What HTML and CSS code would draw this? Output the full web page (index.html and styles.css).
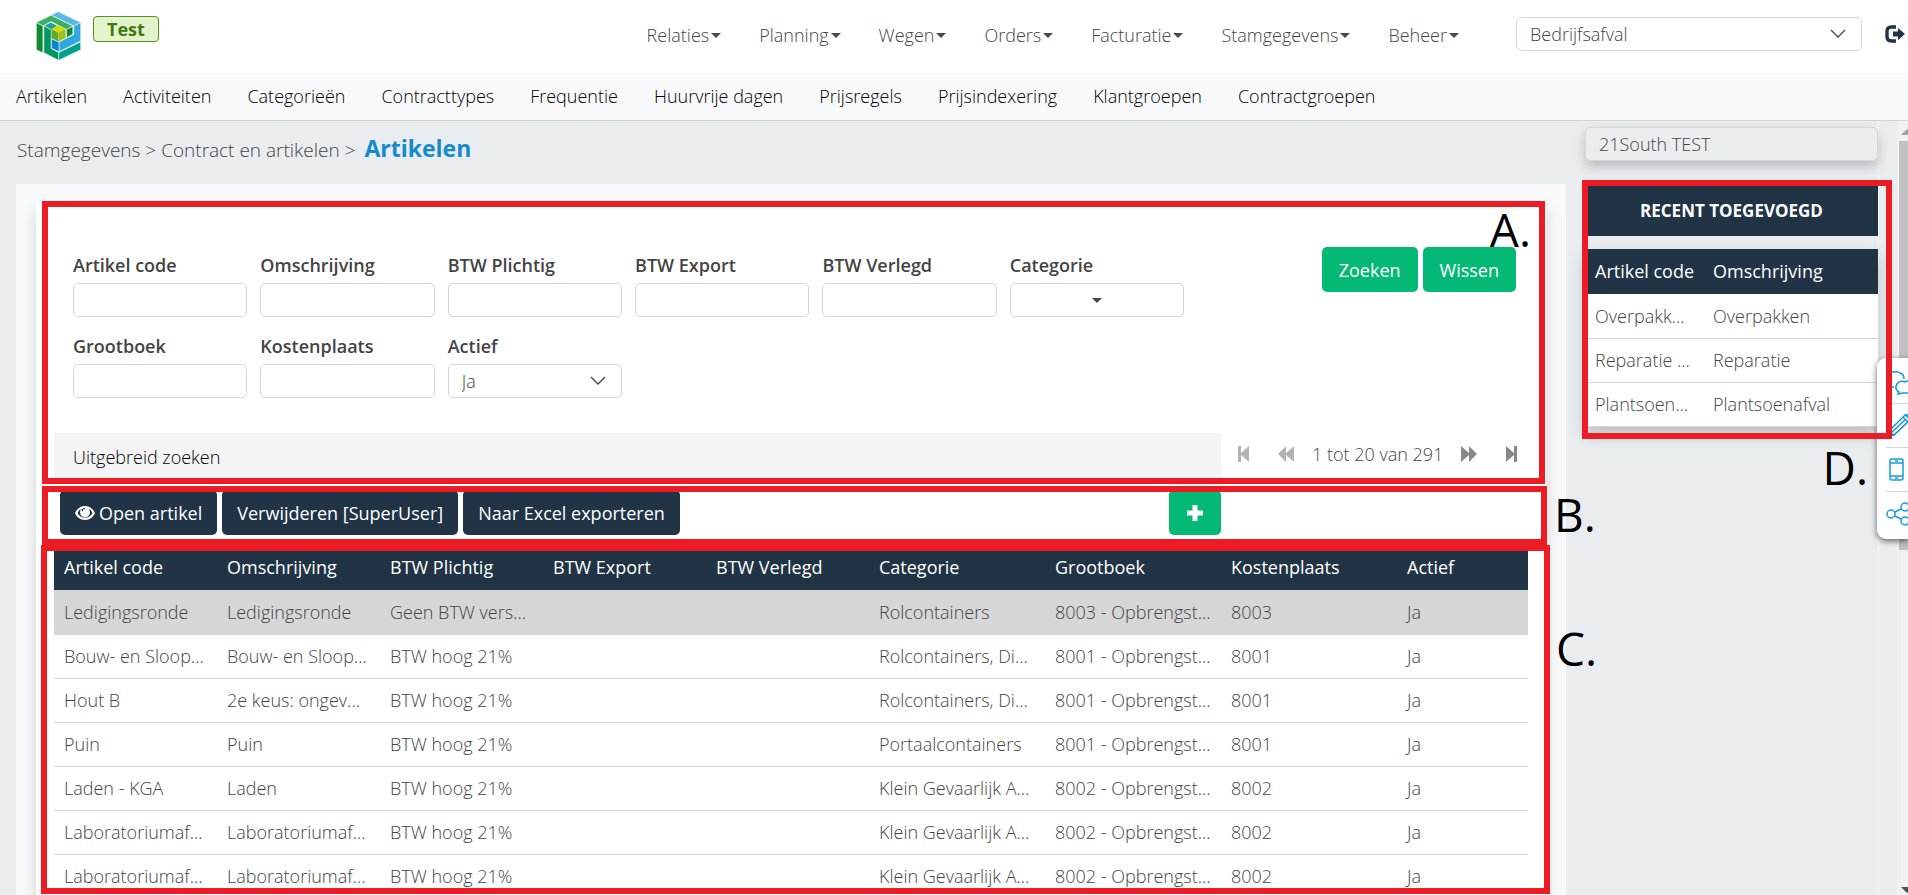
FILE: index.html
```html
<!DOCTYPE html>
<html lang="nl">
<head>
<meta charset="utf-8">
<title>Artikelen</title>
<link rel="stylesheet" href="styles.css">
</head>
<body>
<div class="app">
  <header class="topbar">
    <svg class="logo" viewBox="107 32 137 150" aria-hidden="true">
      <g stroke="#d8f0ea" stroke-width="2" stroke-linejoin="round">
        <polygon fill="#5bb8e6" points="153,43 175,33 243,66 222,77"/>
        <polygon fill="#2fa8df" points="222,77 243,66 243,122 177,155 177,125 222,103"/>
        <polygon fill="#00a08c" points="243,125 243,149 176,181 176,157"/>
        <polygon fill="#0f8a2e" points="108,66 128,76 128,158 108,149"/>
        <polygon fill="#3dab62" points="108,66 153,44 220,77 200,87 153,63 128,76"/>
        <polygon fill="#1f9f9a" points="131,76 152,65 173,76 153,88"/>
        <polygon fill="#009764" points="131,76 153,88 153,145 176,157 176,181 131,158"/>
        <polygon fill="#0f8a2e" points="200,87 219,78 219,102 200,112"/>
        <polygon fill="#0b83cf" points="154,115 177,126 177,155 154,144"/>
      </g>
      <polygon fill="#d3d800" points="154,86 175,75 197,86 175,97"/>
      <polygon fill="#62a82a" points="154,86 175,97 175,124 154,113"/>
      <polygon fill="#9dbf1c" points="175,97 197,86 197,113 175,124"/>
    </svg>
    <span class="env">Test</span>
    <nav class="mainnav">
      <a href="#">Relaties<i class="caret"></i></a>
      <a href="#">Planning<i class="caret"></i></a>
      <a href="#">Wegen<i class="caret"></i></a>
      <a href="#">Orders<i class="caret"></i></a>
      <a href="#">Facturatie<i class="caret"></i></a>
      <a href="#">Stamgegevens<i class="caret"></i></a>
      <a href="#">Beheer<i class="caret"></i></a>
    </nav>
    <select class="control select company" aria-label="Afvalstroom"><option>Bedrijfsafval</option></select>
    <button class="logout" type="button" aria-label="Uitloggen">
      <svg viewBox="0 0 20 18"><path d="M11 2H6.500Q2 2 2 6.500V11.500Q2 16 6.500 16H11" fill="none" stroke="#203446" stroke-width="3.400"/><path d="M8 6.500h5V3l7 6-7 6v-3.500H8z" fill="#203446"/></svg>
    </button>
  </header>

  <nav class="subnav">
    <a href="#">Artikelen</a><a href="#">Activiteiten</a><a href="#">Categorieën</a><a href="#">Contracttypes</a><a href="#">Frequentie</a><a href="#">Huurvrije dagen</a><a href="#">Prijsregels</a><a href="#">Prijsindexering</a><a href="#">Klantgroepen</a><a href="#">Contractgroepen</a>
  </nav>

  <div class="body">
    <main class="main">
      <h1 class="crumbs">Stamgegevens &gt; Contract en artikelen &gt; <b>Artikelen</b></h1>
      <div class="panel">
        <div class="card">
          <section class="search">
            <span class="letter letter-a">A.</span>
            <form class="filters">
              <div class="fields">
                <div class="field"><label for="code">Artikel code</label><input class="control" id="code"></div>
                <div class="field"><label for="oms">Omschrijving</label><input class="control" id="oms"></div>
                <div class="field"><label for="plicht">BTW Plichtig</label><input class="control" id="plicht"></div>
                <div class="field"><label for="export">BTW Export</label><input class="control" id="export"></div>
                <div class="field"><label for="verlegd">BTW Verlegd</label><input class="control" id="verlegd"></div>
                <div class="field"><label for="cat">Categorie</label><button class="control pick" id="cat" type="button"><i class="caret"></i></button></div>
                <div class="field"><label for="groot">Grootboek</label><input class="control" id="groot"></div>
                <div class="field"><label for="kosten">Kostenplaats</label><input class="control" id="kosten"></div>
                <div class="field"><label for="actief">Actief</label><select class="control select" id="actief"><option>Ja</option></select></div>
              </div>
              <div class="actions">
                <button class="btn green" type="button">Zoeken</button>
                <button class="btn green" type="button">Wissen</button>
              </div>
            </form>
            <div class="strip">
              <button class="advanced" type="button">Uitgebreid zoeken</button>
              <div class="pager">
                <button class="page off" type="button" aria-label="Eerste"><svg viewBox="0 0 18 18"><path d="M3 1h3v7l8-7v16L6 10v7H3z"/></svg></button>
                <button class="page off" type="button" aria-label="Vorige"><svg viewBox="0 0 18 18"><path d="M1 9l8-8v7l8-7v16l-8-7v7z"/></svg></button>
                <span>1 tot 20 van 291</span>
                <button class="page" type="button" aria-label="Volgende"><svg viewBox="0 0 18 18"><path d="M17 9L9 1v7L1 1v16l8-7v7z"/></svg></button>
                <button class="page" type="button" aria-label="Laatste"><svg viewBox="0 0 18 18"><path d="M15 1h-3v7L4 1v16l8-7v7h3z"/></svg></button>
              </div>
            </div>
            <div class="frame frame-a"></div>
          </section>

          <section class="toolbar">
            <div class="tools">
              <button class="btn" type="button"><svg class="eye" viewBox="0 0 20 14"><path d="M10 0C5 0 1.800 3.200 0 7c1.800 3.800 5 7 10 7s8.200-3.200 10-7c-1.800-3.800-5-7-10-7z" fill="#fff"/><path d="M6.800 2.500A7 7 0 0 0 2.500 7c1.500 3 4.200 4.800 7.500 4.800s6-1.800 7.500-4.800a7 7 0 0 0-4.300-4.500A5 5 0 1 1 6.800 2.500z" fill="#203446"/><path d="M10 2.500A2.800 2.800 0 0 0 7.200 5.300" fill="none" stroke="#203446" stroke-width="1.200"/></svg>Open artikel</button>
              <button class="btn" type="button">Verwijderen [SuperUser]</button>
              <button class="btn" type="button">Naar Excel exporteren</button>
            </div>
            <button class="btn green add" type="button" aria-label="Toevoegen"><svg viewBox="0 0 16 16"><path d="M5.500 0h5v5.500H16v5h-5.500V16h-5v-5.500H0v-5h5.500z" fill="#fff"/></svg></button>
            <div class="frame frame-b"></div>
            <span class="letter letter-b">B.</span>
          </section>

          <section class="results">
            <table class="grid">
              <colgroup><col span="5" class="narrow"><col span="3" class="wide"><col></colgroup>
              <thead><tr><th>Artikel code</th><th>Omschrijving</th><th>BTW Plichtig</th><th>BTW Export</th><th>BTW Verlegd</th><th>Categorie</th><th>Grootboek</th><th>Kostenplaats</th><th>Actief</th></tr></thead>
              <tbody>
                <tr class="selected"><td>Ledigingsronde</td><td>Ledigingsronde</td><td>Geen BTW vers...</td><td></td><td></td><td>Rolcontainers</td><td>8003 - Opbrengst...</td><td>8003</td><td>Ja</td></tr>
                <tr><td>Bouw- en Sloop...</td><td>Bouw- en Sloop...</td><td>BTW hoog 21%</td><td></td><td></td><td>Rolcontainers, Di...</td><td>8001 - Opbrengst...</td><td>8001</td><td>Ja</td></tr>
                <tr><td>Hout B</td><td>2e keus: ongev...</td><td>BTW hoog 21%</td><td></td><td></td><td>Rolcontainers, Di...</td><td>8001 - Opbrengst...</td><td>8001</td><td>Ja</td></tr>
                <tr><td>Puin</td><td>Puin</td><td>BTW hoog 21%</td><td></td><td></td><td>Portaalcontainers</td><td>8001 - Opbrengst...</td><td>8001</td><td>Ja</td></tr>
                <tr><td>Laden - KGA</td><td>Laden</td><td>BTW hoog 21%</td><td></td><td></td><td>Klein Gevaarlijk A...</td><td>8002 - Opbrengst...</td><td>8002</td><td>Ja</td></tr>
                <tr><td>Laboratoriumaf...</td><td>Laboratoriumaf...</td><td>BTW hoog 21%</td><td></td><td></td><td>Klein Gevaarlijk A...</td><td>8002 - Opbrengst...</td><td>8002</td><td>Ja</td></tr>
                <tr><td>Laboratoriumaf...</td><td>Laboratoriumaf...</td><td>BTW hoog 21%</td><td></td><td></td><td>Klein Gevaarlijk A...</td><td>8002 - Opbrengst...</td><td>8002</td><td>Ja</td></tr>
              </tbody>
            </table>
            <div class="frame frame-c"></div>
            <span class="letter letter-c">C.</span>
          </section>
        </div>
      </div>
    </main>

    <aside class="side">
      <input class="control tenant" value="21South TEST" aria-label="Omgeving" readonly>
      <section class="recent">
        <h2>Recent toegevoegd</h2>
        <table class="grid small">
          <colgroup><col class="first"><col></colgroup>
          <thead><tr><th>Artikel code</th><th>Omschrijving</th></tr></thead>
          <tbody>
            <tr><td>Overpakk...</td><td>Overpakken</td></tr>
            <tr><td>Reparatie ...</td><td>Reparatie</td></tr>
            <tr><td>Plantsoen...</td><td>Plantsoenafval</td></tr>
          </tbody>
        </table>
        <div class="frame frame-d"></div>
        <span class="letter letter-d">D.</span>
      </section>
    </aside>

    <div class="scroll"><i class="up"></i><i class="thumb"></i><i class="down"></i></div>
  </div>

  <div class="dock">
    <button type="button" aria-label="Chat"><svg viewBox="0 0 26 26"><path d="M1 8Q3 2 8 3q3-1 6 1 4 1 4 6M1 18h7"/><path d="M25 13q-3-2-6 0-5-2-8 2-3 5 2 8l-1 2 5-1h8z"/></svg></button>
    <button type="button" aria-label="Bewerken"><svg viewBox="0 0 26 26"><path d="M1 24l2-6L19 2q2-1 4 1t1 4L8 22zM3 18l5 4M17 4l5 5M19 2l6 5M6 19L20 6"/></svg></button>
    <button type="button" aria-label="Telefoon"><svg viewBox="0 0 26 26"><rect x="4" y="2" width="13" height="21" rx="2"/><path d="M4 6h13M4 19h13M9 4h3M9 21h3"/></svg></button>
    <button type="button" aria-label="Delen"><svg viewBox="0 0 26 26"><circle cx="5" cy="13" r="4"/><circle cx="19" cy="6" r="4"/><circle cx="19" cy="20" r="4"/><path d="M9 11l6-3M9 15l6 3"/></svg></button>
  </div>
</div>
</body>
</html>
```

FILE: styles.css
```css
* { box-sizing: border-box; }
body {
  margin: 0;
  background: #e9edf0;
  color: #444;
  font: 300 18px/24px "Open Sans", "Noto Sans", sans-serif;
}
a { color: inherit; text-decoration: none; }
button, input, select { font: inherit; color: inherit; }
button { border: 0; padding: 0; background: none; }

.app { display: flex; flex-direction: column; height: 100vh; overflow: hidden; }

.topbar {
  display: flex;
  align-items: flex-start;
  flex: none;
  height: 73px;
  padding: 11px 3px 0 36px;
  background: #fff;
}
.logo { width: 45px; height: 50px; }
.env {
  margin: 5px 0 0 12px;
  padding: 0 13px;
  border: 1px solid #5a9216;
  border-radius: 4px;
  background: #e3f3cb;
  color: #44780d;
  font-weight: 700;
}
.mainnav { display: flex; margin: 12px 57px 0 auto; gap: 38px; }
.mainnav a { display: flex; align-items: center; gap: 2px; }
.caret {
  border: 5px solid transparent;
  border-top-color: #4a4a4a;
  border-bottom: 0;
}
.control {
  width: 100%;
  height: 34px;
  padding: 0 13px;
  border: 1px solid #d5d6d8;
  border-radius: 5px;
  background-color: #fff;
}
.select {
  appearance: none;
  background-image: url("data:image/svg+xml,%3Csvg xmlns='http://www.w3.org/2000/svg' viewBox='0 0 16 10'%3E%3Cpath d='M1 1l7 7 7-7' fill='none' stroke='%23444' stroke-width='1.300'/%3E%3C/svg%3E");
  background-repeat: no-repeat;
  background-position: right 15px center;
  background-size: 16px 10px;
}
.company { width: 346px; margin-top: 6px; }
.logout { margin: 14px 0 0 23px; }
.logout svg { display: block; width: 20px; height: 18px; }

.subnav {
  display: flex;
  gap: 36px;
  flex: none;
  height: 48px;
  padding: 11px 16px;
  border-bottom: 1px solid #d0d3d6;
  background: #f8f9fb;
  color: #000;
  white-space: nowrap;
}

.body { display: flex; flex: 1; min-height: 0; overflow: hidden; }
.main { flex: 1; min-width: 0; padding-left: 16px; }
.crumbs {
  margin: 0;
  padding: 11px 0 18px 1px;
  font-size: 19px;
  font-weight: 300;
  line-height: 32px;
}
.crumbs b { margin-left: 4px; color: #148ad0; font-size: 23px; font-weight: 700; }
.panel { min-height: 100%; padding: 19px 20px 0; background: #f8f9fb; }
.card {
  min-height: 760px;
  padding: 0 18px;
  background: #fff;
  box-shadow: 0 8px 16px rgba(0, 0, 0, .15);
}

.search, .toolbar, .results, .recent { position: relative; }
.search { padding-top: 44px; }
.filters { display: flex; justify-content: space-between; align-items: flex-start; padding: 0 12px 35px 19px; }
.fields { display: grid; grid-template-columns: repeat(6, 1fr); gap: 17px 13px; width: 77%; padding-top: 6px; }
.field label { display: block; margin-bottom: 6px; font-weight: 600; }
.field .control { display: block; }
.field .pick { display: grid; place-items: center; }
.actions { position: relative; display: flex; gap: 5px; }
.btn {
  height: 45px;
  padding: 0 15px;
  border-radius: 5px;
  background: #203446;
  color: #fff;
  font-weight: 400;
}
.btn.green { padding: 0 17px; background: #04b975; }

.strip { display: flex; }
.advanced { flex: 1; height: 49px; padding: 0 0 2px 19px; background: #f4f4f4; color: #000; text-align: left; }
.pager { display: flex; align-items: center; width: 307px; padding: 0 0 8px 14px; }
.pager span { margin: 0 17px; white-space: nowrap; }
.page { height: 18px; }
.page + .page { margin-left: 24px; }
.page svg { display: block; width: 18px; height: 18px; fill: #888; }
.page.off svg { fill: #b3b3b3; }

.toolbar { display: flex; justify-content: space-between; padding: 8px 307px 10px 6px; }
.tools { display: flex; gap: 5px; }
.eye { width: 20px; height: 14px; margin-right: 4px; }
.btn.add { width: 52px; }
.add svg { display: block; width: 16px; height: 16px; margin: 0 auto; }

.grid { width: 100%; border-collapse: collapse; table-layout: fixed; }
.grid th, .grid td { height: 44px; padding: 0 0 0 10px; overflow: hidden; text-align: left; white-space: nowrap; }
.grid th { height: 45px; padding-bottom: 2px; background: #203446; color: #fff; font-weight: 400; }
.grid td { border-bottom: 1px solid #d5d6d8; }
.narrow { width: 163px; }
.wide { width: 176px; }
.selected td { background: #d5d6d8; }

.side {
  flex: none;
  width: 294px;
  margin: 0 18px 0 19px;
  padding-top: 6px;
  border-right: 1px solid #f4f6f8;
}
.tenant { background: #e9edf0; box-shadow: 0 6px 12px rgba(0, 0, 0, .2); }
.recent { margin-top: 23px; }
.recent h2 {
  margin: 0 0 13px;
  padding: 15px 0 13px;
  background: #203446;
  color: #fff;
  font-size: 17px;
  font-weight: 700;
  line-height: 24px;
  text-align: center;
  text-transform: uppercase;
}
.small { background: #fff; box-shadow: 0 8px 16px rgba(0, 0, 0, .2); }
.small .first { width: 118px; }

.scroll { display: flex; flex-direction: column; flex: none; width: 11px; padding-left: 2px; background: #f1f1f1; }
.up { margin: 8px 0 6px 2px; border: 6px solid transparent; border-top: 0; border-bottom-color: #a3a3a3; }
.thumb { height: 409px; background: #c1c1c1; }
.down { margin: auto 0 2px 2px; border: 6px solid transparent; border-bottom: 0; border-top-color: #505050; }

/* Annotations over the page */
.frame { position: absolute; z-index: 2; border: 6px solid #ed1c24; pointer-events: none; }
.frame-a { inset: -2px -17px -2px -12px; }
.frame-b { inset: 4px -19px 0 -12px; }
.frame-c { top: 0; left: -13px; right: -22px; height: 349px; }
.frame-d { inset: -4px -14px -12px -3px; }
.letter { position: absolute; color: #000; font-size: 46px; font-weight: 400; line-height: 48px; }
.letter-a { top: 2px; right: -3px; }
.letter-b { top: 8px; left: calc(100% + 26px); }
.letter-c { top: 79px; left: calc(100% + 28px); }
.letter-d { top: calc(100% + 16px); right: 10px; }

.dock {
  position: fixed;
  z-index: 1;
  top: 358px;
  right: 0;
  width: 31px;
  padding: 2px 0 3px 9px;
  overflow: hidden;
  border-radius: 9px 0 0 9px;
  background: #fff;
  box-shadow: 0 2px 6px rgba(0, 0, 0, .6);
}
.dock button { display: block; width: 30px; height: 44px; border-bottom: 1px solid #d5d6d8; }
.dock button:last-child { border-bottom: 0; }
.dock svg { display: block; width: 26px; height: 26px; fill: none; stroke: #189ade; stroke-width: 1.500; }
```
